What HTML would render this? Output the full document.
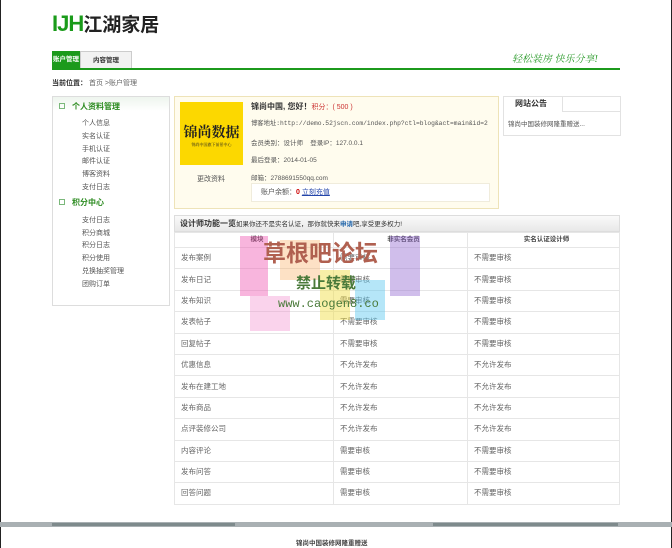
<!DOCTYPE html>
<html><head><meta charset="utf-8"><style>
*{margin:0;padding:0;box-sizing:border-box}
body{width:672px;height:548px;background:#fff;position:relative;overflow:hidden;font-family:"Liberation Sans","Noto Sans CJK SC",sans-serif;font-size:7px;color:#555}
.a{position:absolute}
.lg{left:52px;top:10px;font-size:22px;font-weight:bold;color:#1a9b1a;letter-spacing:-1px}
.lg span{color:#222;font-size:19px;letter-spacing:0}
.tab{top:51px;height:18px;font-size:6.5px;font-weight:bold;line-height:18px;text-align:center;white-space:nowrap}
table{border-collapse:collapse;width:446px}
td{border:1px solid #e6e6e6;height:21.4px;padding:0 0 0 6px;font-size:7.5px;color:#666;line-height:10px}
.side div{font-size:7px;color:#555;line-height:12.8px;padding-left:29px}
.side h4{font-size:8px;color:#2a8a1e;line-height:16px;padding-left:6px}
.side h4 i{display:inline-block;width:6px;height:6px;border:1px solid #7bb87b;margin-right:7px;font-style:normal}
</style></head><body>
<div class="a" style="left:0;top:0;width:1px;height:548px;background:#222"></div>
<div class="a" style="right:0;top:0;width:1px;height:548px;background:#222"></div>
<div class="a lg">IJH<span>江湖家居</span></div>
<div class="a tab" style="left:52px;width:28px;background:#1c9a1c;color:#fff">账户管理</div>
<div class="a tab" style="left:80px;width:52px;background:#f2f2f2;border:1px solid #ccc;border-bottom:none;color:#333">内容管理</div>
<div class="a" style="left:52px;top:68px;width:568px;height:2px;background:#1c9a1c"></div>
<div class="a" style="left:512px;top:50px;font-size:10px;color:#2a9a2a;font-style:italic;font-family:'Liberation Serif','Noto Serif CJK SC',serif">轻松装房 快乐分享!</div>
<div class="a" style="left:52px;top:78px;font-size:7px;color:#666"><b style="color:#333">当前位置：</b> 首页 &gt;账户管理</div>

<div class="a side" style="left:52px;top:96px;width:118px;height:210px;border:1px solid #ddd;background:linear-gradient(#eef5ee,#fff 14px)">
<h4 style="margin-top:2px"><i></i>个人资料管理</h4>
<div style="margin-top:3px">个人信息</div><div>实名认证</div><div>手机认证</div><div>邮件认证</div><div>博客资料</div><div>支付日志</div>
<h4><i></i>积分中心</h4>
<div style="margin-top:4px">支付日志</div><div>积分商城</div><div>积分日志</div><div>积分使用</div><div>兑换抽奖管理</div><div>团购订单</div>
</div>

<div class="a" style="left:174px;top:96px;width:325px;height:113px;border:1px solid #eee3b8;background:#fffcee"></div>
<div class="a" style="left:180px;top:102px;width:63px;height:63px;background:#fcd800;text-align:center;padding-top:20px;font-size:14px;font-weight:bold;color:#222;font-family:'Liberation Serif','Noto Serif CJK SC',serif">锦尚数据<div style="font-size:4px;font-weight:normal">锦尚中国旗下前景中心</div></div>
<div class="a" style="left:197px;top:174px;font-size:7px">更改资料</div>
<div class="a" style="left:251px;top:101px;font-size:8px;font-weight:bold;color:#333">锦尚中国, 您好！<span style="color:#c33;font-size:7px;font-weight:normal">积分：( 500 )</span></div>
<div class="a" style="left:251px;top:118px;font-size:6.3px;font-family:'Liberation Mono','Noto Sans CJK SC',monospace">博客地址:http://demo.52jscn.com/index.php?ctl=blog&amp;act=main&amp;id=2</div>
<div class="a" style="left:251px;top:137px;font-size:6.5px">会员类别：设计师 &nbsp;&nbsp; 登录IP：127.0.0.1</div>
<div class="a" style="left:251px;top:154px;font-size:6.5px">最后登录：2014-01-05</div>
<div class="a" style="left:251px;top:172px;font-size:6.5px">邮箱：2788691550qq.com</div>
<div class="a" style="left:251px;top:183px;width:239px;height:19px;background:#fff;border:1px solid #f0ecdc;font-size:7px;line-height:17px;padding-left:9px">账户余额：<b style="color:#c00">0</b> <u style="color:#2244aa">立刻充值</u></div>

<div class="a" style="left:503px;top:96px;width:118px;height:40px;border:1px solid #e2e2e2"></div>
<div class="a" style="left:503px;top:96px;width:60px;height:16px;border-right:1px solid #e2e2e2;font-size:8px;font-weight:bold;color:#333;line-height:15px;padding-left:12px">网站公告</div>
<div class="a" style="left:563px;top:111px;width:58px;height:1px;background:#e2e2e2"></div>
<div class="a" style="left:508px;top:118px;font-size:6.5px">锦尚中国装修网隆重赠送...</div>

<div class="a" style="left:174px;top:215px;width:446px;height:17px;background:linear-gradient(#fafafa,#e8e8e8);border:1px solid #ddd;font-size:8px;font-weight:bold;color:#333;line-height:16px;padding-left:5px">设计师功能一览<span style="font-size:6.5px;font-weight:normal">如果你还不是实名认证，那你就快来<b style="color:#2266aa">申请</b>吧,享受更多权力!</span></div>
<table class="a" style="left:174px;top:232px">
<tr><td style="width:159px;height:15px;text-align:center;font-weight:bold;font-size:6.5px;color:#444">模块</td><td style="width:134px;height:15px;text-align:center;font-weight:bold;font-size:6.5px;color:#444">非实名会员</td><td style="height:15px;text-align:center;font-weight:bold;font-size:6.5px;color:#444">实名认证设计师</td></tr>
<tr><td>发布案例</td><td>需要审核</td><td>不需要审核</td></tr>
<tr><td>发布日记</td><td>需要审核</td><td>不需要审核</td></tr>
<tr><td>发布知识</td><td>需要审核</td><td>不需要审核</td></tr>
<tr><td>发表帖子</td><td>不需要审核</td><td>不需要审核</td></tr>
<tr><td>回复帖子</td><td>不需要审核</td><td>不需要审核</td></tr>
<tr><td>优惠信息</td><td>不允许发布</td><td>不允许发布</td></tr>
<tr><td>发布在建工地</td><td>不允许发布</td><td>不允许发布</td></tr>
<tr><td>发布商品</td><td>不允许发布</td><td>不允许发布</td></tr>
<tr><td>点评装修公司</td><td>不允许发布</td><td>不允许发布</td></tr>
<tr><td>内容评论</td><td>需要审核</td><td>不需要审核</td></tr>
<tr><td>发布问答</td><td>需要审核</td><td>不需要审核</td></tr>
<tr><td>回答问题</td><td>需要审核</td><td>不需要审核</td></tr>
</table>

<div class="a" style="left:240px;top:236px;width:28px;height:60px;background:rgba(240,90,180,.45)"></div>
<div class="a" style="left:280px;top:240px;width:40px;height:40px;background:rgba(250,170,90,.35)"></div>
<div class="a" style="left:320px;top:270px;width:30px;height:50px;background:rgba(240,220,60,.45)"></div>
<div class="a" style="left:355px;top:280px;width:30px;height:40px;background:rgba(90,200,240,.45)"></div>
<div class="a" style="left:390px;top:236px;width:30px;height:60px;background:rgba(150,110,210,.45)"></div>
<div class="a" style="left:250px;top:296px;width:40px;height:35px;background:rgba(240,130,200,.35)"></div>
<div class="a" style="left:263px;top:234px;font-size:23px;color:#b06050;font-weight:bold">草根吧论坛</div>
<div class="a" style="left:296px;top:272px;font-size:15px;color:#4a7a3a;font-weight:bold">禁止转载</div>
<div class="a" style="left:278px;top:297px;font-size:12px;color:#4a7a3a;font-family:'Liberation Mono',monospace">www.caogen8.co</div>

<div class="a" style="left:0;top:522px;width:672px;height:5px;background:#a9b0b3"></div>
<div class="a" style="left:52px;top:523px;width:183px;height:3px;background:#7e8a8c"></div>
<div class="a" style="left:433px;top:523px;width:185px;height:3px;background:#7e8a8c"></div>
<div class="a" style="left:296px;top:537px;font-size:6.5px;font-weight:bold;color:#444">锦尚中国装修网隆重赠送</div>
</body></html>
